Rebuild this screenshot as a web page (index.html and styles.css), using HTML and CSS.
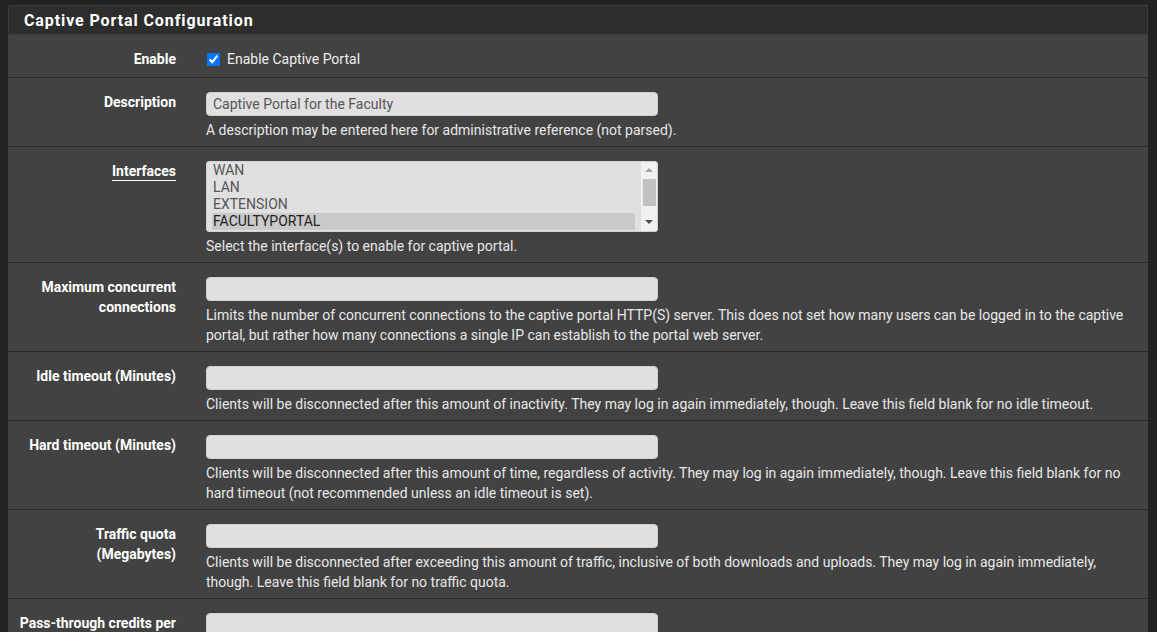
FILE: index.html
```html
<!DOCTYPE html>
<html>
<head>
<meta charset="utf-8">
<title>Captive Portal Configuration</title>
<link rel="stylesheet" href="styles.css">
</head>
<body>
<div class="panel">
  <div class="panel-heading"><h2 class="panel-title">Captive Portal Configuration</h2></div>
  <div class="panel-body">
    <div class="form-row check-row">
      <div class="form-label">Enable</div>
      <div class="form-ctl">
        <label class="check"><input type="checkbox" checked> Enable Captive Portal</label>
      </div>
    </div>
    <div class="form-row">
      <div class="form-label">Description</div>
      <div class="form-ctl">
        <input class="text-input" type="text" value="Captive Portal for the Faculty">
        <div class="help">A description may be entered here for administrative reference (not parsed).</div>
      </div>
    </div>
    <div class="form-row">
      <div class="form-label"><span class="under">Interfaces</span></div>
      <div class="form-ctl">
        <div class="listbox" role="listbox" aria-multiselectable="true">
          <div class="lb-options">
            <div class="lb-opt" role="option">WAN</div>
            <div class="lb-opt" role="option">LAN</div>
            <div class="lb-opt" role="option">EXTENSION</div>
            <div class="lb-opt selected" role="option" aria-selected="true">FACULTYPORTAL</div>
          </div>
          <div class="lb-scroll">
            <div class="lb-btn"><span class="tri-up"></span></div>
            <div class="lb-track"><div class="lb-thumb"></div></div>
            <div class="lb-btn"><span class="tri-down"></span></div>
          </div>
        </div>
        <div class="help">Select the interface(s) to enable for captive portal.</div>
      </div>
    </div>
    <div class="form-row">
      <div class="form-label">Maximum concurrent connections</div>
      <div class="form-ctl">
        <input class="text-input" type="text">
        <div class="help">Limits the number of concurrent connections to the captive portal HTTP(S) server. This does not set how many users can be logged in to the captive portal, but rather how many connections a single IP can establish to the portal web server.</div>
      </div>
    </div>
    <div class="form-row">
      <div class="form-label">Idle timeout (Minutes)</div>
      <div class="form-ctl">
        <input class="text-input" type="text">
        <div class="help">Clients will be disconnected after this amount of inactivity. They may log in again immediately, though. Leave this field blank for no idle timeout.</div>
      </div>
    </div>
    <div class="form-row">
      <div class="form-label">Hard timeout (Minutes)</div>
      <div class="form-ctl">
        <input class="text-input" type="text">
        <div class="help">Clients will be disconnected after this amount of time, regardless of activity. They may log in again immediately, though. Leave this field blank for no hard timeout (not recommended unless an idle timeout is set).</div>
      </div>
    </div>
    <div class="form-row">
      <div class="form-label">Traffic quota (Megabytes)</div>
      <div class="form-ctl">
        <input class="text-input" type="text">
        <div class="help">Clients will be disconnected after exceeding this amount of traffic, inclusive of both downloads and uploads. They may log in again immediately, though. Leave this field blank for no traffic quota.</div>
      </div>
    </div>
    <div class="form-row">
      <div class="form-label">Pass-through credits per MAC address.</div>
      <div class="form-ctl">
        <input class="text-input" type="text">
        <div class="help">Allows passing through the captive portal without authentication a limited number of times per MAC address.</div>
      </div>
    </div>
  </div>
</div>
</body>
</html>
```

FILE: styles.css
```css
html, body {
  background: #222222;
}
body {
  margin: 0;
  padding: 5px 0 0 8px;
  font-family: Roboto, "Liberation Sans", Arial, sans-serif;
  font-size: 14px;
  color: #e8e8e8;
  overflow: hidden;
}
.panel {
  width: 1140px;
  background: #424242;
}
.panel-heading {
  height: 30px;
  box-sizing: border-box;
  background: #2d2d2d;
  border: 1px solid #3b3b3b;
  display: flex;
  align-items: center;
  padding-left: 15px;
}
.panel-title {
  margin: 0;
  font-size: 16px;
  font-weight: 700;
  color: #ffffff;
  letter-spacing: 0.9px;
}
.form-row {
  display: grid;
  grid-template-columns: 183px 1fr;
  padding: 14px 0 6px;
  border-bottom: 1px solid #2a2a2a;
}
.check-row {
  padding-bottom: 8px;
}
.form-label {
  padding: 0 15px 0 8px;
  text-align: right;
  font-weight: 700;
  font-size: 14px;
  line-height: 20px;
  color: #ffffff;
}
.under {
  text-decoration: underline;
  text-underline-offset: 4px;
}
.form-ctl {
  padding: 0 15px;
  min-width: 0;
}
.check {
  display: flex;
  align-items: center;
  line-height: 20px;
  font-size: 14px;
  color: #eeeeee;
}
.check input {
  width: 13px;
  height: 13px;
  margin: 0 7px 0 1px;
}
.text-input {
  display: block;
  box-sizing: border-box;
  width: 452px;
  height: 24px;
  margin: 0;
  padding: 0 6px;
  background: #e0e0e0;
  border: 1px solid #d2d2d2;
  border-radius: 4px;
  font-family: Roboto, "Liberation Sans", Arial, sans-serif;
  font-size: 14px;
  color: #555555;
  outline: none;
}
.help {
  margin-top: 4px;
  line-height: 20px;
  color: #e8e8e8;
}
.listbox {
  display: flex;
  box-sizing: border-box;
  width: 452px;
  height: 71px;
  background: #e0e0e0;
  border: 1px solid #d2d2d2;
  border-radius: 3px;
  overflow: hidden;
}
.lb-options {
  flex: 1;
  padding: 0 6px 0 5px;
}
.lb-opt {
  height: 17px;
  line-height: 17px;
  padding-left: 1px;
  font-size: 14px;
  color: #555555;
  white-space: nowrap;
}
.lb-opt.selected {
  background: #cacaca;
  color: #222222;
}
.lb-scroll {
  width: 16px;
  display: flex;
  flex-direction: column;
  background: #f1f1f1;
}
.lb-btn {
  height: 16px;
  display: flex;
  align-items: center;
  justify-content: center;
}
.tri-up {
  width: 0;
  height: 0;
  margin-bottom: 1px;
  border-left: 4px solid transparent;
  border-right: 4px solid transparent;
  border-bottom: 4px solid #a3a3a3;
}
.tri-down {
  width: 0;
  height: 0;
  margin-bottom: 3px;
  border-left: 4px solid transparent;
  border-right: 4px solid transparent;
  border-top: 4px solid #505050;
}
.lb-track {
  flex: 1;
  padding: 1px 1px 0 2px;
}
.lb-thumb {
  height: 27px;
  background: #c1c1c1;
}
```
